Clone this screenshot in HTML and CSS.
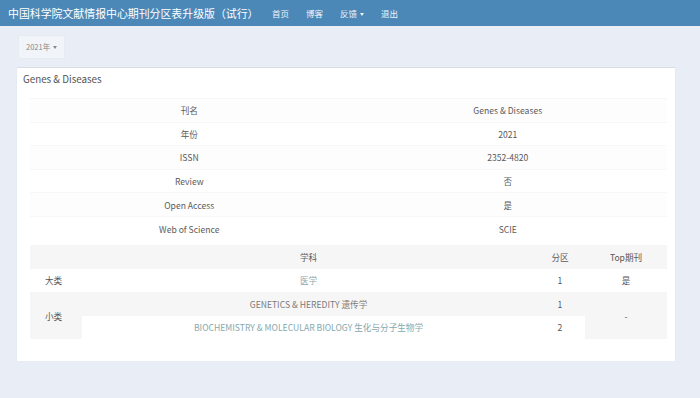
FILE: index.html
```html
<!DOCTYPE html>
<html lang="zh-CN">
<head>
<meta charset="UTF-8" />
<meta name="viewport" content="width=device-width, initial-scale=1.0"/>
<title>期刊分区表</title>
<link rel="stylesheet" href="styles.css">
</head>
<body>

<div class="navbar">
    <span class="brand">中国科学院文献情报中心期刊分区表升级版（试行）</span>
    <ul class="nav">
        <li><a href="#">首页</a></li>
        <li><a href="#">博客</a></li>
        <li><a href="#">反馈 <span class="caret"></span></a></li>
        <li><a href="#">退出</a></li>
    </ul>
</div>

<div class="main">
    <div class="year-select">
        <a href="#" class="btn-year">2021年 <span class="caret"></span></a>
    </div>

    <div class="panel">
        <div class="panel-heading">Genes &amp; Diseases</div>
        <div class="panel-body">
            <!-- 基本信息 -->
            <table class="info-table">
                <tr><td>刊名</td><td>Genes &amp; Diseases</td></tr>
                <tr><td>年份</td><td>2021</td></tr>
                <tr><td>ISSN</td><td>2352-4820</td></tr>
                <tr><td>Review</td><td>否</td></tr>
                <tr><td>Open Access</td><td>是</td></tr>
                <tr><td>Web of Science</td><td>SCIE</td></tr>
            </table>

            <!-- 分区信息 -->
            <table class="zone-table">
                <tr class="head">
                    <td class="c-type"></td>
                    <td class="c-subject">学科</td>
                    <td class="c-zone">分区</td>
                    <td class="c-top">Top期刊</td>
                </tr>
                <tr>
                    <td class="c-type">大类</td>
                    <td class="c-subject"><a href="#">医学</a></td>
                    <td class="c-zone">1</td>
                    <td class="c-top">是</td>
                </tr>
                <tr class="odd">
                    <td class="c-type" rowspan="2">小类</td>
                    <td class="c-subject"><span class="muted">GENETICS &amp; HEREDITY 遗传学</span></td>
                    <td class="c-zone">1</td>
                    <td class="c-top" rowspan="2">-</td>
                </tr>
                <tr>
                    <td class="c-subject"><a href="#">BIOCHEMISTRY &amp; MOLECULAR BIOLOGY 生化与分子生物学</a></td>
                    <td class="c-zone">2</td>
                </tr>
            </table>
        </div>
    </div>
</div>

</body>
</html>
```

FILE: styles.css
```css
body {
    font-family: "Noto Sans CJK SC", "Noto Sans", sans-serif;
    background: #e9eef6;
    color: #5a5a5a;
    margin: 0;
    padding: 0;
    font-size: 8.6px;
}

a {
    text-decoration: none;
}

.navbar {
    height: 26px;
    background: #4b88b8;
    display: flex;
    align-items: center;
    padding: 0 8px;
}

.brand {
    color: #fff;
    font-size: 10.9px;
    width: 256px;
}

.nav {
    list-style: none;
    margin: 0 0 0 8px;
    padding: 0;
    display: flex;
    gap: 17px;
}

.nav a {
    color: #eef4fa;
    font-size: 8.5px;
}

.caret {
    display: inline-block;
    width: 0;
    height: 0;
    border-top: 3px solid currentColor;
    border-left: 2.5px solid transparent;
    border-right: 2.5px solid transparent;
    vertical-align: middle;
    margin-left: 1px;
}

.main {
    padding: 9px 25px 0 17px;
}

.year-select {
    padding: 0 0 8px 1px;
}

.btn-year {
    display: inline-block;
    color: #888;
    font-size: 7.5px;
    background: #f1f4f9;
    border: 1px solid #e6eaf1;
    padding: 5px 7px;
    line-height: 12px;
}

.panel {
    background: #fff;
    border-top: 1px solid #d8dde5;
    box-shadow: 0 1px 2px rgba(0, 0, 0, 0.04);
    padding-bottom: 22px;
}

.panel-heading {
    color: #555;
    font-size: 9.8px;
    padding: 5px 6px 6px;
    line-height: 13px;
}

.panel-body {
    padding: 0 8px 0 13px;
}

table {
    width: 100%;
    border-collapse: collapse;
}

td {
    text-align: center;
    padding: 0;
}

.info-table {
    margin-top: 6px;
    margin-bottom: 5px;
}

.info-table td {
    width: 50%;
    height: 23.6px;
    box-sizing: border-box;
    border-top: 1px solid #f7f7f7;
}

.info-table tr:nth-child(odd) td {
    background: #fdfdfd;
}

.zone-table td {
    height: 23.5px;
}

.zone-table .head td,
.zone-table .odd td {
    background: #f6f6f6;
}

.c-type {
    width: 52px;
    text-align: left;
    padding-left: 15px;
    box-sizing: border-box;
    color: #555;
}

.c-zone {
    width: 50px;
}

.c-top {
    width: 82px;
    color: #555;
}

.c-subject a {
    color: #86a9ae;
}

.muted {
    color: #7a7a7a;
}
```
